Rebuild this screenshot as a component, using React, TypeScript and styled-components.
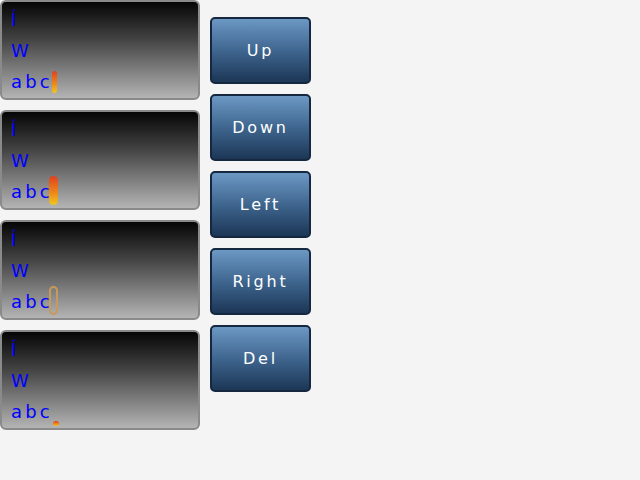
import React from "react";
import styled, { createGlobalStyle } from "styled-components";

const GlobalStyle = createGlobalStyle`
  html, body {
    margin: 0;
    padding: 0;
    background: #f4f4f4;
    font-family: "DejaVu Sans", sans-serif;
  }
`;

const Screen = styled.div`
  display: flex;
  gap: 10px;
  width: 640px;
  height: 480px;
`;

const PanelColumn = styled.div`
  display: flex;
  flex-direction: column;
  gap: 10px;
`;

const Panel = styled.div`
  box-sizing: border-box;
  width: 200px;
  height: 100px;
  border: 2px solid #8a8a8a;
  border-radius: 6px;
  background: linear-gradient(to bottom, #050505 0%, #454545 40%, #b4b4b4 100%);
  padding: 2px 0 0 9px;
  overflow: hidden;
`;

const Line = styled.div`
  display: flex;
  align-items: center;
  height: 31px;
  color: #0000ff;
  font-size: 18px;
  letter-spacing: -1.3px;
  white-space: pre;
`;

type CursorMode = "thin" | "wide" | "hollow" | "dot";

const Caret = styled.span<{ $mode: CursorMode }>`
  display: inline-block;
  box-sizing: border-box;
  border-radius: 5px;
  align-self: flex-end;
  margin-left: ${(p) => (p.$mode === "thin" ? 4 : p.$mode === "dot" ? 5 : 1)}px;
  width: ${(p) => (p.$mode === "thin" ? 5 : p.$mode === "dot" ? 6 : 9)}px;
  height: ${(p) => (p.$mode === "thin" ? 22 : p.$mode === "dot" ? 5 : 29)}px;
  margin-bottom: ${(p) => (p.$mode === "thin" ? 4 : p.$mode === "dot" ? 1 : 2)}px;
  background: ${(p) =>
    p.$mode === "hollow"
      ? "transparent"
      : "linear-gradient(to bottom, #e0401e 0%, #ee8a1a 60%, #f0c81e 100%)"};
  border: ${(p) => (p.$mode === "hollow" ? "2px solid #c89a5a" : "none")};
`;

const ButtonColumn = styled.div`
  display: flex;
  flex-direction: column;
  gap: 10px;
  padding-top: 17px;
`;

const KeyButton = styled.button`
  box-sizing: border-box;
  width: 101px;
  height: 67px;
  border: 2px solid #15283f;
  border-radius: 5px;
  background: linear-gradient(to bottom, #6c98c4 0%, #3f668f 50%, #1c3656 100%);
  color: #ffffff;
  font-family: "DejaVu Sans", sans-serif;
  font-size: 16px;
  letter-spacing: 2.8px;
  padding: 0;
  cursor: pointer;
`;

const modes: CursorMode[] = ["thin", "wide", "hollow", "dot"];
const keys = ["Up", "Down", "Left", "Right", "Del"];

export default function App() {
  return (
    <>
      <GlobalStyle />
      <Screen>
        <PanelColumn>
          {modes.map((m) => (
            <Panel key={m}>
              <Line>Í</Line>
              <Line>W</Line>
              <Line>
                a b c<Caret $mode={m} />
              </Line>
            </Panel>
          ))}
        </PanelColumn>
        <ButtonColumn>
          {keys.map((k) => (
            <KeyButton key={k}>{k}</KeyButton>
          ))}
        </ButtonColumn>
      </Screen>
    </>
  );
}
